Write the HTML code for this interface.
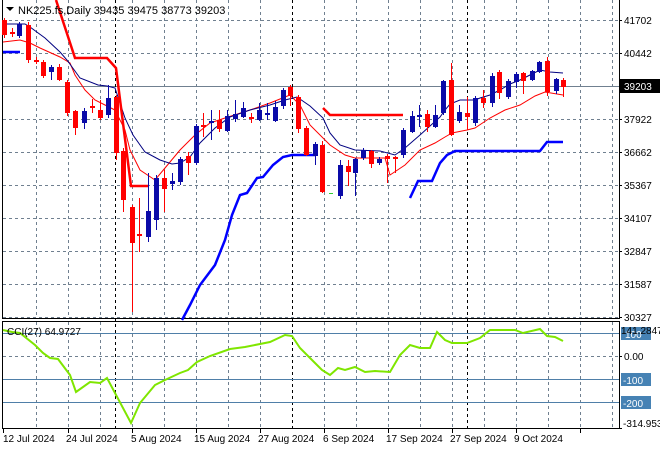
<!DOCTYPE html>
<html><head><meta charset="utf-8"><style>
html,body{margin:0;padding:0;background:#fff;}
svg{display:block;font-family:"Liberation Sans",sans-serif;font-size:10px;}
</style></head><body>
<svg width="660" height="450" viewBox="0 0 660 450" xmlns="http://www.w3.org/2000/svg">
<rect width="660" height="450" fill="#fff"/>
<g stroke="#708090" stroke-width="1" stroke-dasharray="3,3" fill="none">
<path d="M36.5 0V318M68.5 0V318M100.5 0V318M132.5 0V318M164.5 0V318M196.5 0V318M228.5 0V318M260.5 0V318M324.5 0V318M356.5 0V318M388.5 0V318M420.5 0V318M452.5 0V318M484.5 0V318M516.5 0V318M548.5 0V318M580.5 0V318M612.5 0V318"/>
<path d="M3 20.5H619M3 53.5H619M3 119.5H619M3 152.5H619M3 185.5H619M3 218.5H619M3 251.5H619M3 284.5H619M3 317.5H619"/>
<path d="M36.5 322V428M68.5 322V428M100.5 322V428M132.5 322V428M164.5 322V428M196.5 322V428M228.5 322V428M260.5 322V428M324.5 322V428M356.5 322V428M388.5 322V428M420.5 322V428M452.5 322V428M484.5 322V428M516.5 322V428M548.5 322V428M580.5 322V428M612.5 322V428"/>
<path d="M3 356.5H619"/>
</g>
<path d="M3 86.5H619" stroke="#708090"/>
<g stroke="#000" stroke-dasharray="3,3"><path d="M115.5 0V428M292.5 0V428M467.5 0V428"/></g>
<path d="M3 333.5H619M3 379.5H619M3 402.5H619" stroke="#4f7fa8"/>
<g stroke="#000" fill="none"><path d="M2.5 0V318.5H619.5V0"/><path d="M2.5 321.5H619.5V428.5H2.5Z"/></g>
<polyline fill="none" stroke="#f00" stroke-width="1" points="3,42 20,40 30,43 40,48 60,57 70,63 75,75 85,90 95,100 105,105 115,110 125,130 130,150 140,170 155,180 165,168 180,150 195,135 210,123 225,118 250,110 270,103 290,95 300,105 310,125 330,145 345,155 355,158 370,158 385,158 390,175 405,165 420,150 435,143 445,137 452,133 467,130 475,128 490,118 505,110 520,105 535,96 545,92 563,95"/>
<polyline fill="none" stroke="#000080" stroke-width="1" points="3,24 25,24 30,27 45,38 60,52 67,60 80,78 98,85 107,86 115,88 125,118 133,135 145,152 160,160 172,164 180,163 190,157 200,143 215,128 230,117 250,110 270,105 285,100 297,97 310,106 323,118 330,133 340,145 355,150 380,151 395,155 405,148 420,135 440,117 445,110 450,104 460,100 475,100 480,98 490,95 500,90 510,84 520,80 530,75 540,70 550,72 563,73"/>
<g fill="none" stroke="#f00" stroke-width="2.5">
<polyline points="56,0 75,58 107,58 116,68 131,186 148,186"/>
<polyline points="323,108 330,115 403,115"/>
</g>
<g fill="none" stroke="#00f" stroke-width="2.5">
<polyline points="3,52 20,52"/>
<polyline points="182,320 190,305 200,285 215,265 225,240 232,215 240,195 247,193 257,178 263,177 273,165 283,157 292,155 315,155"/>
<polyline points="410,198 418,181 432,181 440,163 447,155 455,151 540,151 547,142 563,142"/>
</g>
<g fill="#f00">
<rect x="4" y="18" width="1" height="20"/><rect x="2" y="20" width="5" height="15"/>
<rect x="12" y="28" width="1" height="9"/><rect x="10" y="32" width="5" height="2"/>
<rect x="28" y="22" width="1" height="41"/><rect x="26" y="25" width="5" height="35"/>
<rect x="36" y="57" width="1" height="7"/><rect x="34" y="60" width="5" height="2"/>
<rect x="43" y="60" width="1" height="18"/><rect x="41" y="62" width="5" height="14"/>
<rect x="59" y="64" width="1" height="17"/><rect x="57" y="67" width="5" height="13"/>
<rect x="67" y="80" width="1" height="36"/><rect x="65" y="82" width="5" height="31"/>
<rect x="75" y="110" width="1" height="25"/><rect x="73" y="111" width="5" height="17"/>
<rect x="92" y="99" width="1" height="14"/><rect x="90" y="106" width="5" height="2"/>
<rect x="100" y="100" width="1" height="20"/><rect x="98" y="110" width="5" height="8"/>
<rect x="116" y="95" width="1" height="65"/><rect x="114" y="97" width="5" height="56"/>
<rect x="123" y="148" width="1" height="64"/><rect x="121" y="151" width="5" height="49"/>
<rect x="132" y="205" width="1" height="107"/><rect x="130" y="207" width="5" height="36"/>
<rect x="139" y="198" width="1" height="54"/><rect x="137" y="234" width="5" height="2"/>
<rect x="164" y="170" width="1" height="42"/><rect x="162" y="178" width="5" height="11"/>
<rect x="188" y="152" width="1" height="23"/><rect x="186" y="156" width="5" height="7"/>
<rect x="203" y="113" width="1" height="24"/><rect x="201" y="125" width="5" height="2"/>
<rect x="219" y="110" width="1" height="22"/><rect x="217" y="120" width="5" height="9"/>
<rect x="251" y="113" width="1" height="10"/><rect x="249" y="117" width="5" height="2"/>
<rect x="290" y="85" width="1" height="21"/><rect x="288" y="87" width="5" height="9"/>
<rect x="298" y="95" width="1" height="38"/><rect x="296" y="97" width="5" height="32"/>
<rect x="306" y="126" width="1" height="30"/><rect x="304" y="128" width="5" height="27"/>
<rect x="322" y="141" width="1" height="52"/><rect x="320" y="145" width="5" height="47"/>
<rect x="348" y="160" width="1" height="26"/><rect x="346" y="166" width="5" height="6"/>
<rect x="371" y="150" width="1" height="18"/><rect x="369" y="151" width="5" height="13"/>
<rect x="387" y="154" width="1" height="29"/><rect x="385" y="156" width="5" height="3"/>
<rect x="395" y="156" width="1" height="17"/><rect x="393" y="157" width="5" height="2"/>
<rect x="427" y="110" width="1" height="22"/><rect x="425" y="114" width="5" height="13"/>
<rect x="451" y="63" width="1" height="73"/><rect x="449" y="80" width="5" height="55"/>
<rect x="467" y="97" width="1" height="33"/><rect x="465" y="113" width="5" height="4"/>
<rect x="483" y="90" width="1" height="18"/><rect x="481" y="98" width="5" height="5"/>
<rect x="499" y="70" width="1" height="29"/><rect x="497" y="72" width="5" height="21"/>
<rect x="523" y="72" width="1" height="22"/><rect x="521" y="73" width="5" height="8"/>
<rect x="547" y="57" width="1" height="39"/><rect x="545" y="61" width="5" height="31"/>
<rect x="563" y="78" width="1" height="19"/><rect x="561" y="80" width="5" height="7"/>
</g>
<g fill="#0a0aa8">
<rect x="19" y="22" width="1" height="16"/><rect x="17" y="24" width="5" height="12"/>
<rect x="51" y="65" width="1" height="15"/><rect x="49" y="67" width="5" height="5"/>
<rect x="84" y="108" width="1" height="21"/><rect x="82" y="111" width="5" height="12"/>
<rect x="108" y="85" width="1" height="33"/><rect x="106" y="98" width="5" height="17"/>
<rect x="148" y="173" width="1" height="69"/><rect x="146" y="211" width="5" height="26"/>
<rect x="156" y="175" width="1" height="55"/><rect x="154" y="178" width="5" height="42"/>
<rect x="172" y="173" width="1" height="17"/><rect x="170" y="181" width="5" height="3"/>
<rect x="180" y="157" width="1" height="28"/><rect x="178" y="159" width="5" height="23"/>
<rect x="196" y="124" width="1" height="41"/><rect x="194" y="126" width="5" height="37"/>
<rect x="211" y="110" width="1" height="30"/><rect x="209" y="121" width="5" height="2"/>
<rect x="227" y="110" width="1" height="22"/><rect x="225" y="116" width="5" height="15"/>
<rect x="235" y="100" width="1" height="22"/><rect x="233" y="114" width="5" height="5"/>
<rect x="243" y="102" width="1" height="16"/><rect x="241" y="108" width="5" height="9"/>
<rect x="259" y="103" width="1" height="18"/><rect x="257" y="110" width="5" height="10"/>
<rect x="267" y="103" width="1" height="17"/><rect x="265" y="113" width="5" height="2"/>
<rect x="275" y="101" width="1" height="21"/><rect x="273" y="107" width="5" height="14"/>
<rect x="283" y="88" width="1" height="21"/><rect x="281" y="90" width="5" height="16"/>
<rect x="315" y="142" width="1" height="23"/><rect x="313" y="144" width="5" height="12"/>
<rect x="340" y="160" width="1" height="39"/><rect x="338" y="165" width="5" height="31"/>
<rect x="355" y="158" width="1" height="38"/><rect x="353" y="159" width="5" height="14"/>
<rect x="363" y="148" width="1" height="12"/><rect x="361" y="150" width="5" height="8"/>
<rect x="379" y="157" width="1" height="8"/><rect x="377" y="159" width="5" height="4"/>
<rect x="403" y="128" width="1" height="30"/><rect x="401" y="130" width="5" height="25"/>
<rect x="412" y="111" width="1" height="22"/><rect x="410" y="116" width="5" height="16"/>
<rect x="419" y="105" width="1" height="22"/><rect x="417" y="115" width="5" height="2"/>
<rect x="435" y="105" width="1" height="23"/><rect x="433" y="115" width="5" height="12"/>
<rect x="443" y="80" width="1" height="35"/><rect x="441" y="81" width="5" height="32"/>
<rect x="459" y="105" width="1" height="18"/><rect x="457" y="112" width="5" height="9"/>
<rect x="475" y="96" width="1" height="30"/><rect x="473" y="98" width="5" height="25"/>
<rect x="492" y="73" width="1" height="34"/><rect x="490" y="76" width="5" height="27"/>
<rect x="508" y="79" width="1" height="20"/><rect x="506" y="81" width="5" height="16"/>
<rect x="516" y="72" width="1" height="16"/><rect x="514" y="74" width="5" height="8"/>
<rect x="532" y="70" width="1" height="11"/><rect x="530" y="71" width="5" height="9"/>
<rect x="539" y="61" width="1" height="12"/><rect x="537" y="62" width="5" height="10"/>
<rect x="556" y="78" width="1" height="16"/><rect x="554" y="79" width="5" height="12"/>
</g>
<rect x="329" y="193" width="4" height="1" fill="#3c3"/>
<polyline fill="none" stroke="#7fe600" stroke-width="2" points="3,330 12,332 20,333 35,345 43,353 50,358 58,359 70,375 76,392 90,382 100,383 107,378 115,393 131,423 140,403 155,385 165,380 180,373 188,370 197,362 210,356 230,349 245,347 270,342 285,335 292,336 300,348 315,363 322,370 330,375 338,368 345,370 355,367 365,372 375,371 390,372 400,355 410,345 420,348 430,348 437,332 445,340 452,343 467,343 480,338 490,330 515,330 523,333 540,329 547,336 555,337 563,341"/>
<path d="M6 7h8l-4 4z" fill="#000"/>
<text x="18" y="14" fill="#000" font-size="11">NK225.fs,Daily  39435 39475 38773 39203</text>
<text x="7" y="335" fill="#000">CCI(27) 64.9727</text>
<g stroke="#000"><path d="M619 20.5h3M619 53.5h3M619 119.5h3M619 152.5h3M619 185.5h3M619 218.5h3M619 251.5h3M619 284.5h3M619 317.5h3M619 356.5h3M619 428.5h3"/></g>
<g fill="#000">
<text x="624" y="24">41702</text><text x="624" y="57">40442</text>
<text x="624" y="123">37922</text><text x="624" y="156">36662</text>
<text x="624" y="189">35367</text><text x="624" y="222">34107</text>
<text x="624" y="255">32847</text><text x="624" y="288">31587</text>
<text x="624" y="321">30327</text>
</g>
<rect x="620" y="79" width="40" height="14" fill="#000"/>
<text x="624" y="90" fill="#fff">39203</text>
<g fill="#4682b4"><rect x="621" y="327" width="30" height="13"/><rect x="621" y="373" width="30" height="13"/><rect x="621" y="396" width="30" height="13"/></g>
<g fill="#fff"><text x="625" y="338">100</text><text x="623" y="384">-100</text><text x="623" y="407">-200</text></g>
<g fill="#000">
<text x="621" y="334">141.2847</text>
<text x="624" y="360">0.00</text>
<text x="623" y="427">-314.953</text>
</g>
<g stroke="#000"><path d="M3.5 429v4M68.5 429v4M132.5 429v4M196.5 429v4M260.5 429v4M324.5 429v4M388.5 429v4M452.5 429v4M516.5 429v4M580.5 429v4"/></g>
<g fill="#000">
<text x="3" y="442">12 Jul 2024</text>
<text x="66" y="442">24 Jul 2024</text>
<text x="131" y="442">5 Aug 2024</text>
<text x="194" y="442">15 Aug 2024</text>
<text x="258" y="442">27 Aug 2024</text>
<text x="323" y="442">6 Sep 2024</text>
<text x="386" y="442">17 Sep 2024</text>
<text x="450" y="442">27 Sep 2024</text>
<text x="514" y="442">9 Oct 2024</text>
</g>
</svg>
</body></html>
